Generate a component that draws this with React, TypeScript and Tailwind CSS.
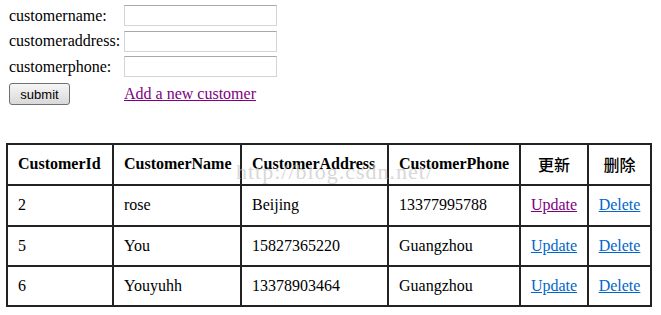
import React from 'react';

type Row = { id: string; name: string; address: string; phone: string; visited?: boolean };

const rows: Row[] = [
  { id: '2', name: 'rose', address: 'Beijing', phone: '13377995788', visited: true },
  { id: '5', name: 'You', address: '15827365220', phone: 'Guangzhou' },
  { id: '6', name: 'Youyuhh', address: '13378903464', phone: 'Guangzhou' },
];

const serif = "font-['Liberation_Serif','Times_New_Roman','Noto_Sans_CJK_SC',serif]";

const Field: React.FC<{ label: string }> = ({ label }) => (
  <>
    <label className="leading-[20px]">{label}</label>
    <input className="h-[21px] w-[153px] border border-[#d4d4d4] border-t-[#a8a8a8] bg-white outline-none" />
  </>
);

export default function App() {
  const cell = 'border-2 border-[#222] px-[10px] h-[40px] text-left';
  return (
    <div className={`${serif} text-[16px] text-black bg-white min-h-[315px] w-[661px]`}>
      <div className="grid grid-cols-[115px_auto] items-center gap-y-[4.5px] pl-[9px] pt-[5px] w-max">
        <Field label="customername:" />
        <Field label="customeraddress:" />
        <Field label="customerphone:" />
        <div>
          <button className="h-[22px] w-[61px] rounded-[3px] border border-[#707070] bg-gradient-to-b from-[#f6f6f6] to-[#d8d8d8] font-['Liberation_Sans',Arial,sans-serif] text-[13px] leading-none">
            submit
          </button>
        </div>
        <a href="#" className="text-[#800080] underline leading-[20px]">Add a new customer</a>
      </div>

      <div className="relative ml-[6px] mt-[37px] w-max">
        <table className="border-collapse table-fixed w-[644px]">
          <colgroup>
            <col className="w-[106px]" />
            <col className="w-[128px]" />
            <col className="w-[147px]" />
            <col className="w-[132px]" />
            <col className="w-[68px]" />
            <col className="w-[63px]" />
          </colgroup>
          <thead>
            <tr>
              <th className={`${cell} h-[41px]`}>CustomerId</th>
              <th className={`${cell} h-[41px]`}>CustomerName</th>
              <th className={`${cell} h-[41px]`}>CustomerAddress</th>
              <th className={`${cell} h-[41px]`}>CustomerPhone</th>
              <th className="border-2 border-[#222] h-[41px] text-center font-['Noto_Sans_CJK_SC',sans-serif] font-medium">更新</th>
              <th className="border-2 border-[#222] h-[41px] text-center font-['Noto_Sans_CJK_SC',sans-serif] font-medium">删除</th>
            </tr>
          </thead>
          <tbody>
            {rows.map((r, i) => (
              <tr key={r.id}>
                <td className={`${cell} ${i === 0 ? 'h-[41px]' : ''}`}>{r.id}</td>
                <td className={cell}>{r.name}</td>
                <td className={cell}>{r.address}</td>
                <td className={cell}>{r.phone}</td>
                <td className="border-2 border-[#222] text-center">
                  <a href="#" className={`underline ${r.visited ? 'text-[#800080]' : 'text-[#0066cc]'}`}>Update</a>
                </td>
                <td className="border-2 border-[#222] text-center">
                  <a href="#" className="underline text-[#0066cc]">Delete</a>
                </td>
              </tr>
            ))}
          </tbody>
        </table>
        <span className="pointer-events-none absolute left-[230px] top-[12px] text-[22px] tracking-[1px] text-[#c8c8c8] opacity-70">
          http://blog.csdn.net/
        </span>
      </div>
    </div>
  );
}
